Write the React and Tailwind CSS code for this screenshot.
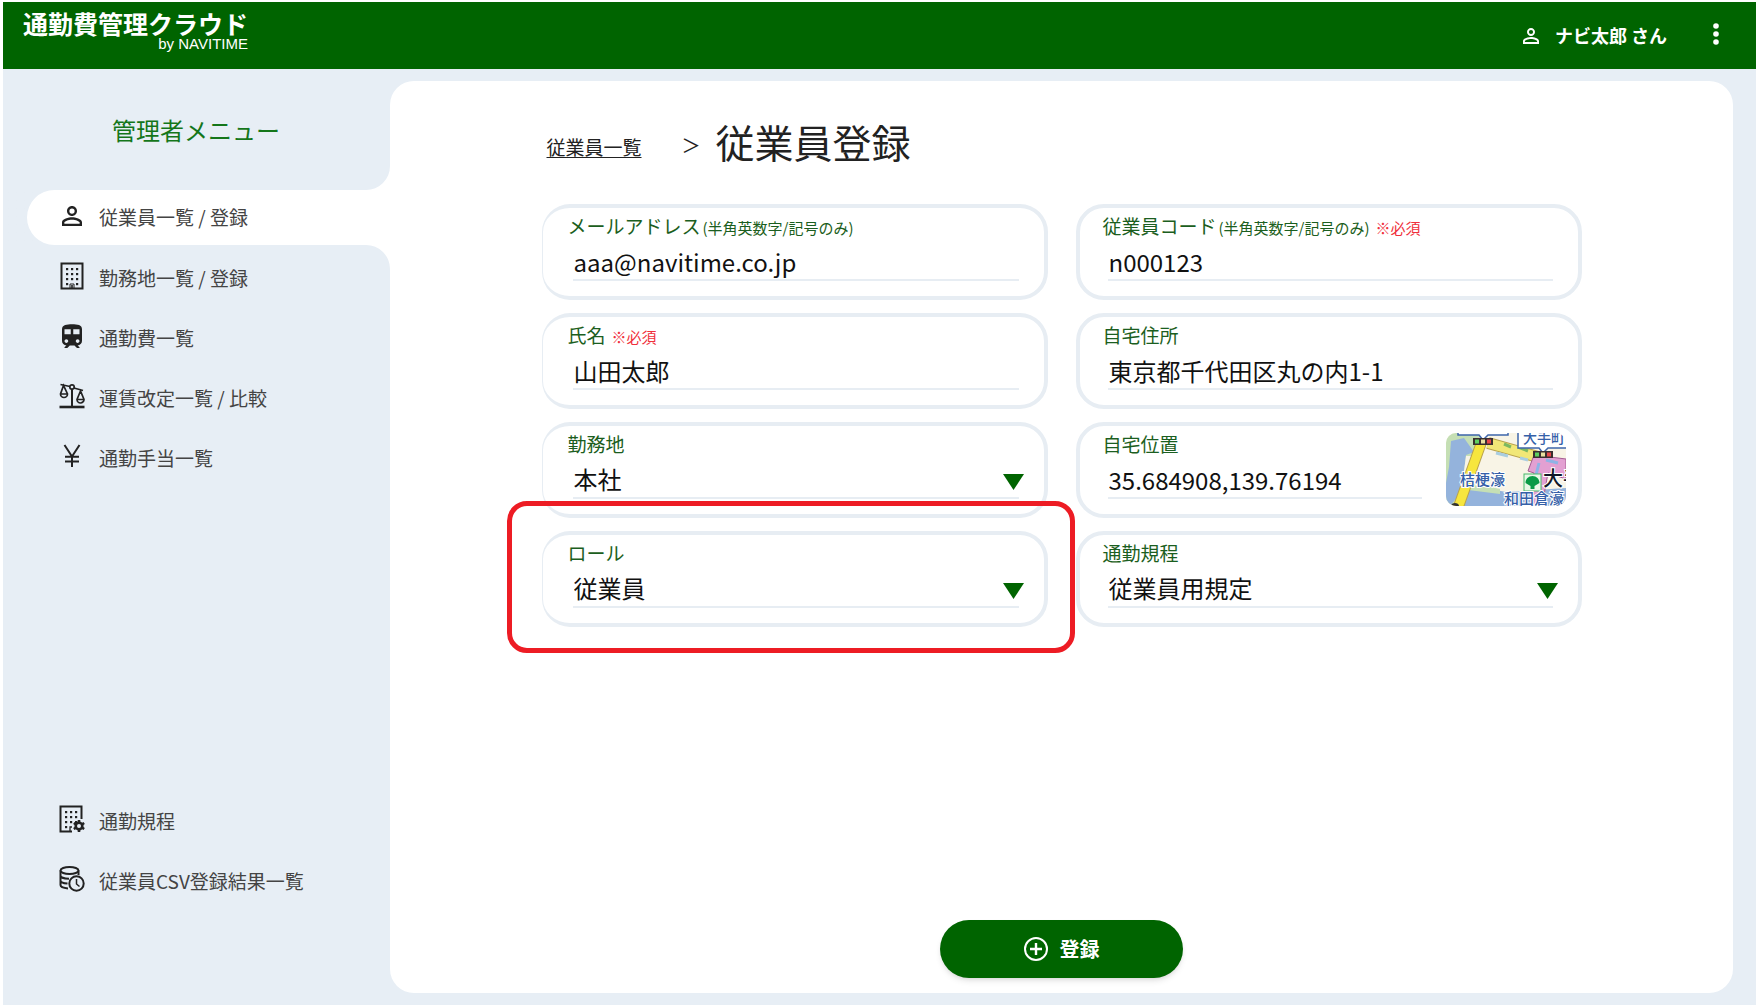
import { useState } from "react";
import clsx from "clsx";

const inputClass =
  "ml-[5px] mt-2 h-9 min-w-0 appearance-none rounded-none border-b-2 border-[#e7edf3] bg-transparent pb-0.5 pl-px text-2xl leading-8 font-normal text-[#111] outline-none";

function PersonIcon({ className }) {
  return (
    <svg viewBox="4 4 16 16" fill="currentColor" className={className} aria-hidden="true">
      <path d="M12 5.9a2.1 2.1 0 1 1 0 4.2 2.1 2.1 0 0 1 0-4.2m0 9c2.97 0 6.1 1.46 6.1 2.1v1.1H5.9V17c0-.64 3.13-2.1 6.1-2.1M12 4C9.79 4 8 5.79 8 8s1.79 4 4 4 4-1.79 4-4-1.79-4-4-4zm0 9c-2.67 0-8 1.34-8 4v3h16v-3c0-2.66-5.33-4-8-4z" />
    </svg>
  );
}

const windows = [
  [6, 6], [11, 6], [16, 6],
  [6, 11], [11, 11], [16, 11],
  [6, 16], [11, 16], [16, 16],
  [6, 21], [16, 21],
];

function BuildingIcon() {
  return (
    <svg viewBox="0 0 24 28" fill="currentColor" className="h-7 w-6" aria-hidden="true">
      <path d="M1.5 1.5h21v25h-21z" fill="none" stroke="currentColor" strokeWidth="2" />
      {windows.map(([x, y]) => (
        <rect key={`${x}-${y}`} x={x} y={y} width="2.2" height="2.2" />
      ))}
      <path d="M10 26v-4h4v4" fill="none" stroke="currentColor" strokeWidth="1" />
      <path d="M12 23v3" stroke="currentColor" strokeWidth="1.6" />
    </svg>
  );
}

function BuildingGearIcon() {
  return (
    <svg viewBox="0 0 26 28" fill="currentColor" className="h-7 w-[26px]" aria-hidden="true">
      <path d="M22.5 14V1.5h-21v25H13" fill="none" stroke="currentColor" strokeWidth="2" />
      {windows.slice(0, 10).map(([x, y]) => (
        <rect key={`${x}-${y}`} x={x} y={y} width="2.2" height="2.2" />
      ))}
      <path d="M11 26v-4h2" fill="none" stroke="currentColor" strokeWidth="1.3" />
      <circle cx="20" cy="21" r="3.3" fill="none" stroke="currentColor" strokeWidth="2.6" />
      <path
        d="M20 15v2.500M20 24.500V27M14.800 18l2.200 1.300M23 22.700l2.200 1.300M14.800 24l2.200-1.300M23 19.300l2.200-1.300"
        stroke="currentColor"
        strokeWidth="2.6"
      />
    </svg>
  );
}

function TrainIcon() {
  return (
    <svg viewBox="4 2 16 19" fill="currentColor" className="h-6 w-5" aria-hidden="true">
      <path d="M12 2c-4 0-8 .5-8 4v9.5C4 17.43 5.57 19 7.5 19L6 20.5v.5h2.23l2-2H14l2 2h2v-.5L16.5 19c1.93 0 3.5-1.57 3.5-3.5V6c0-3.5-3.58-4-8-4zM7.5 17c-.83 0-1.5-.67-1.5-1.5S6.67 14 7.5 14s1.5.67 1.5 1.5S8.33 17 7.5 17zm3.5-7H6V6h5v4zm2 0V6h5v4h-5zm3.5 7c-.83 0-1.5-.67-1.5-1.5s.67-1.5 1.5-1.5 1.5.67 1.5 1.5-.67 1.5-1.5 1.5z" />
    </svg>
  );
}

function ScalesIcon() {
  return (
    <svg viewBox="0 0 26 26" fill="none" stroke="currentColor" strokeWidth="1.7" className="size-[26px]" aria-hidden="true">
      <circle cx="13" cy="4" r="2.2" />
      <path d="M1.5 1.5 11 3.500M15 5l9 2.500" />
      <path d="M13 6v17" strokeWidth="2" />
      <path d="M.5 24h25" strokeWidth="2.6" />
      <path d="M4.500 2.500 1.500 11a3.500 3.500 0 0 0 7 0zM1.500 11h7" />
      <path d="M21.500 8l-3.500 8.500a3.500 3.500 0 0 0 7 0zM18 16.500h7" />
    </svg>
  );
}

function YenIcon() {
  return (
    <svg viewBox="0 0 18 24" fill="none" stroke="currentColor" strokeWidth="2" className="h-6 w-[18px]" aria-hidden="true">
      <path d="M1.500 1 9 12.500 16.500 1M9 12v11M2 12.800h14M2 17.500h14" />
    </svg>
  );
}

function DatabaseClockIcon() {
  return (
    <svg viewBox="0 0 26 26" fill="none" stroke="currentColor" strokeWidth="2" className="size-[26px]" aria-hidden="true">
      <ellipse cx="10.500" cy="4.500" rx="9" ry="3.500" />
      <path d="M1.500 4.500v14.500c0 1.800 3 3 7.500 3.400M19.500 4.500v4.500M1.500 9.500c0 1.800 3.500 3.200 8.500 3.300M1.500 14.500c0 1.600 2.800 2.800 7 3.100" />
      <circle cx="17.500" cy="17.500" r="7.200" />
      <path d="M17.500 13v5l3 2.500" strokeWidth="1.500" />
    </svg>
  );
}

function PlusCircleIcon() {
  return (
    <svg viewBox="0 0 24 24" fill="none" stroke="currentColor" strokeWidth="2" className="size-6" aria-hidden="true">
      <circle cx="12" cy="12" r="11" />
      <path d="M12 6v12M6 12h12" strokeWidth="2.4" />
    </svg>
  );
}

function Signal({ x, y }) {
  return (
    <g transform={`translate(${x} ${y})`}>
      <rect width="20" height="7" fill="#3b3030" />
      <rect x="2" y="1.5" width="4" height="4" fill="#5fd060" />
      <rect x="8" y="1.5" width="4" height="4" fill="#e8e0a0" />
      <rect x="14" y="1.5" width="4" height="4" fill="#e8474a" />
    </g>
  );
}

function HomeMap() {
  return (
    <svg
      viewBox="0 0 120 73"
      role="img"
      aria-label="自宅位置の地図"
      className="h-[73px] w-[120px] shrink-0 rounded-[10px] font-medium"
    >
      <rect width="120" height="73" fill="#f8f4e6" />
      <path d="M0 0h40L12 73H0z" fill="#c5dfb4" />
      <path d="M5 8l13-3 10 14-8 3-4 36-12 15H0V50L3 34z" fill="#94b3dc" />
      <path d="M20 23h16l-8 22H17z" fill="#f8f4e6" />
      <path d="M24 52l36 7 60-4v18H17z" fill="#94b3dc" />
      <path d="M24 50l30 6v5l-32-4z" fill="#c5dfb4" />
      <path d="M36 8 12 75" stroke="#b9a24c" strokeWidth="11" />
      <path d="M36 8 12 75" stroke="#f7e63e" strokeWidth="9" />
      <path d="M42 10l50 14" stroke="#b9a24c" strokeWidth="12" />
      <path d="M42 10l50 14" stroke="#f1e777" strokeWidth="10" />
      <path d="M58 11l7 3M72 14l10 4" stroke="#7cb860" strokeWidth="3" />
      <path d="M88 22l32 4v20l-18-6-6 33H84l4-33-6-2z" fill="#e3a0d2" stroke="#a45c92" strokeWidth="1" />
      <path d="M93 30l-3 12M100 27l12 3" stroke="#8fb3e6" strokeWidth="3" />
      <path d="M50 20l12 3M74 25l8 2" stroke="#a9cde0" strokeWidth="3" />
      <path d="M12-4h50v6H42l-5 5-4-5H12z" fill="#fff" stroke="#3e66ab" strokeWidth="1.5" />
      <path d="M72-4h52v19h-22l-5 5-4-5H72z" fill="#fff" stroke="#3e66ab" strokeWidth="1.5" />
      <Signal x={27} y={5} />
      <Signal x={87} y={18} />
      <rect x="78" y="41" width="17" height="17" fill="#e9f7e6" stroke="#48b96a" />
      <path d="M86.500 43c-4 0-7 3-7 7l5 3v3h4v-3l5-3c0-4-3-7-7-7z" fill="#0a9a46" />
      <g fill="#3560a8" stroke="#fff" strokeWidth="2" paintOrder="stroke" fontSize="15">
        <text x="77" y="10" fontSize="14">大手町</text>
        <text x="14" y="52">桔梗濠</text>
        <text x="58" y="71">和田倉濠</text>
      </g>
      <text x="97" y="53" fill="#111827" stroke="#fff" strokeWidth="2" paintOrder="stroke" fontSize="20">
        大手
      </text>
      <path d="M5 73c0-4 8-4 8 0z" fill="#333" />
    </svg>
  );
}

function Field({ id, label, hint, required, clipped, aside, children }) {
  return (
    <div
      className={clsx(
        "flex gap-6 rounded-[28px] border-4 border-[#e7edf3] pt-[7px] pb-[15px]",
        clipped ? "border-l pl-[25px]" : "pl-[23px]",
        aside ? "pr-3" : "pr-[25px]"
      )}
    >
      <div className="flex min-w-0 flex-1 flex-col">
        <label
          htmlFor={id}
          className="flex h-[22px] items-baseline text-[19px] leading-[22px] whitespace-nowrap text-[#1b5e20]"
        >
          {label}
          {hint && <span className="ml-0.5 text-[15px]">{hint}</span>}
          {required && <span className="ml-1.5 text-[15px] text-[#f0303c]">※必須</span>}
        </label>
        {children}
      </div>
      {aside && <div className="-mb-3 flex items-start">{aside}</div>}
    </div>
  );
}

function TextField({ id, defaultValue, type = "text", ...field }) {
  return (
    <Field id={id} {...field}>
      <input id={id} type={type} defaultValue={defaultValue} className={inputClass} />
    </Field>
  );
}

function SelectField({ id, options, ...field }) {
  const [value, setValue] = useState(options[0]);

  return (
    <Field id={id} {...field}>
      <div className="relative flex">
        <select
          id={id}
          value={value}
          onChange={(e) => setValue(e.target.value)}
          className={clsx(inputClass, "flex-1")}
        >
          {options.map((option) => (
            <option key={option}>{option}</option>
          ))}
        </select>
        <svg
          viewBox="0 0 21 16"
          className="pointer-events-none absolute -right-[5px] bottom-[9px] h-4 w-[21px] text-[#006400]"
          aria-hidden="true"
        >
          <path d="M0 0h21L10.500 16z" fill="currentColor" />
        </svg>
      </div>
    </Field>
  );
}

function MenuLink({ icon, children }) {
  return (
    <a href="#" className="flex h-[60px] items-center gap-[13px] pl-[55px] text-[19px] text-[#444]">
      <span className="flex w-7 justify-center pb-1 text-[#222]">{icon}</span>
      {children}
    </a>
  );
}

function Sidebar() {
  return (
    <aside className="flex w-[387px] shrink-0 flex-col bg-white">
      <div className="h-[121px] rounded-br-3xl bg-[#e7eef5] pt-[43px] pl-[109px]">
        <h2 className="text-2xl leading-9 font-normal text-[#14761a]">管理者メニュー</h2>
      </div>
      <div className="bg-linear-to-r from-[#e7eef5] from-50% to-white to-50% pl-6">
        <a
          href="#"
          aria-current="page"
          className="flex h-[55px] items-center gap-[13px] rounded-l-full bg-white pl-[31px] text-[19px] text-[#444]"
        >
          <span className="flex w-7 justify-center pb-1 text-[#222]">
            <PersonIcon className="size-5" />
          </span>
          従業員一覧 / 登録
        </a>
      </div>
      <nav className="flex flex-1 flex-col justify-between rounded-tr-3xl bg-[#e7eef5] pt-[3px] pb-[94px]">
        <ul>
          <li><MenuLink icon={<BuildingIcon />}>勤務地一覧 / 登録</MenuLink></li>
          <li><MenuLink icon={<TrainIcon />}>通勤費一覧</MenuLink></li>
          <li><MenuLink icon={<ScalesIcon />}>運賃改定一覧 / 比較</MenuLink></li>
          <li><MenuLink icon={<YenIcon />}>通勤手当一覧</MenuLink></li>
        </ul>
        <ul>
          <li><MenuLink icon={<BuildingGearIcon />}>通勤規程</MenuLink></li>
          <li><MenuLink icon={<DatabaseClockIcon />}>従業員CSV登録結果一覧</MenuLink></li>
        </ul>
      </nav>
    </aside>
  );
}

function Header() {
  return (
    <header className="flex h-[67px] items-center justify-between bg-[#006400] pr-8 pl-5 text-white">
      <a href="#" className="flex flex-col items-end">
        <span className="mb-0.5 text-[25px] leading-[26px] font-bold">通勤費管理クラウド</span>
        <span className="mb-3 font-['Liberation_Sans',sans-serif] text-[15px] leading-3">by NAVITIME</span>
      </a>
      <div className="flex items-center">
        <PersonIcon className="size-4" />
        <span className="ml-4 text-[18px] font-bold">ナビ太郎 さん</span>
        <button type="button" aria-label="メニュー" className="mb-1 ml-[41px] flex h-8 w-4 items-center justify-center">
          <svg viewBox="0 0 6 22" fill="currentColor" className="h-[22px] w-1.5">
            <circle cx="3" cy="3" r="2.8" />
            <circle cx="3" cy="11" r="2.8" />
            <circle cx="3" cy="19" r="2.8" />
          </svg>
        </button>
      </div>
    </header>
  );
}

export default function App() {
  return (
    <div className="flex min-h-screen flex-col bg-white pt-0.5 pr-[5px] pl-[3px] font-['Noto_Sans_CJK_JP',sans-serif]">
      <Header />
      <div className="flex flex-1 bg-[#e7eef5]">
        <Sidebar />
        <main className="my-3 mr-[23px] flex min-w-0 flex-1 flex-col rounded-3xl bg-white px-10 pt-8 pb-[15px]">
          <form
            className="mx-auto flex w-full max-w-[1040px] flex-1 flex-col"
            onSubmit={(e) => e.preventDefault()}
          >
            <div className="mb-[35px] flex h-14 items-center pl-[5px] text-[#222]">
              <a href="#" className="pt-3 text-[19px] underline underline-offset-2">従業員一覧</a>
              <span className="ml-10 pt-2 text-[19px]">＞</span>
              <h1 className="ml-[15px] text-[39px] leading-[56px]">従業員登録</h1>
            </div>

            <div className="grid grid-cols-2 gap-x-7 gap-y-[13px]">
              <TextField id="email" type="email" label="メールアドレス" hint="(半角英数字/記号のみ)" defaultValue="aaa@navitime.co.jp" clipped />
              <TextField id="code" label="従業員コード" hint="(半角英数字/記号のみ)" required defaultValue="n000123" />
              <TextField id="name" label="氏名" required defaultValue="山田太郎" clipped />
              <TextField id="address" label="自宅住所" defaultValue="東京都千代田区丸の内1-1" />
              <SelectField id="office" label="勤務地" options={["本社"]} clipped />
              <TextField id="location" label="自宅位置" defaultValue="35.684908,139.76194" aside={<HomeMap />} />
              <div className="relative">
                <SelectField id="role" label="ロール" options={["従業員"]} clipped />
                <div className="pointer-events-none absolute -top-[30px] -right-[27px] -bottom-[26px] -left-[35px] rounded-[20px] border-[5px] border-[#ed1c24]" />
              </div>
              <SelectField id="rule" label="通勤規程" options={["従業員用規定"]} />
            </div>

            <button
              type="submit"
              className="mx-auto mt-auto flex h-[58px] w-[243px] items-center justify-center gap-3 rounded-full bg-[#006400] text-xl font-bold text-white shadow-md"
            >
              <PlusCircleIcon />
              登録
            </button>
          </form>
        </main>
      </div>
    </div>
  );
}
